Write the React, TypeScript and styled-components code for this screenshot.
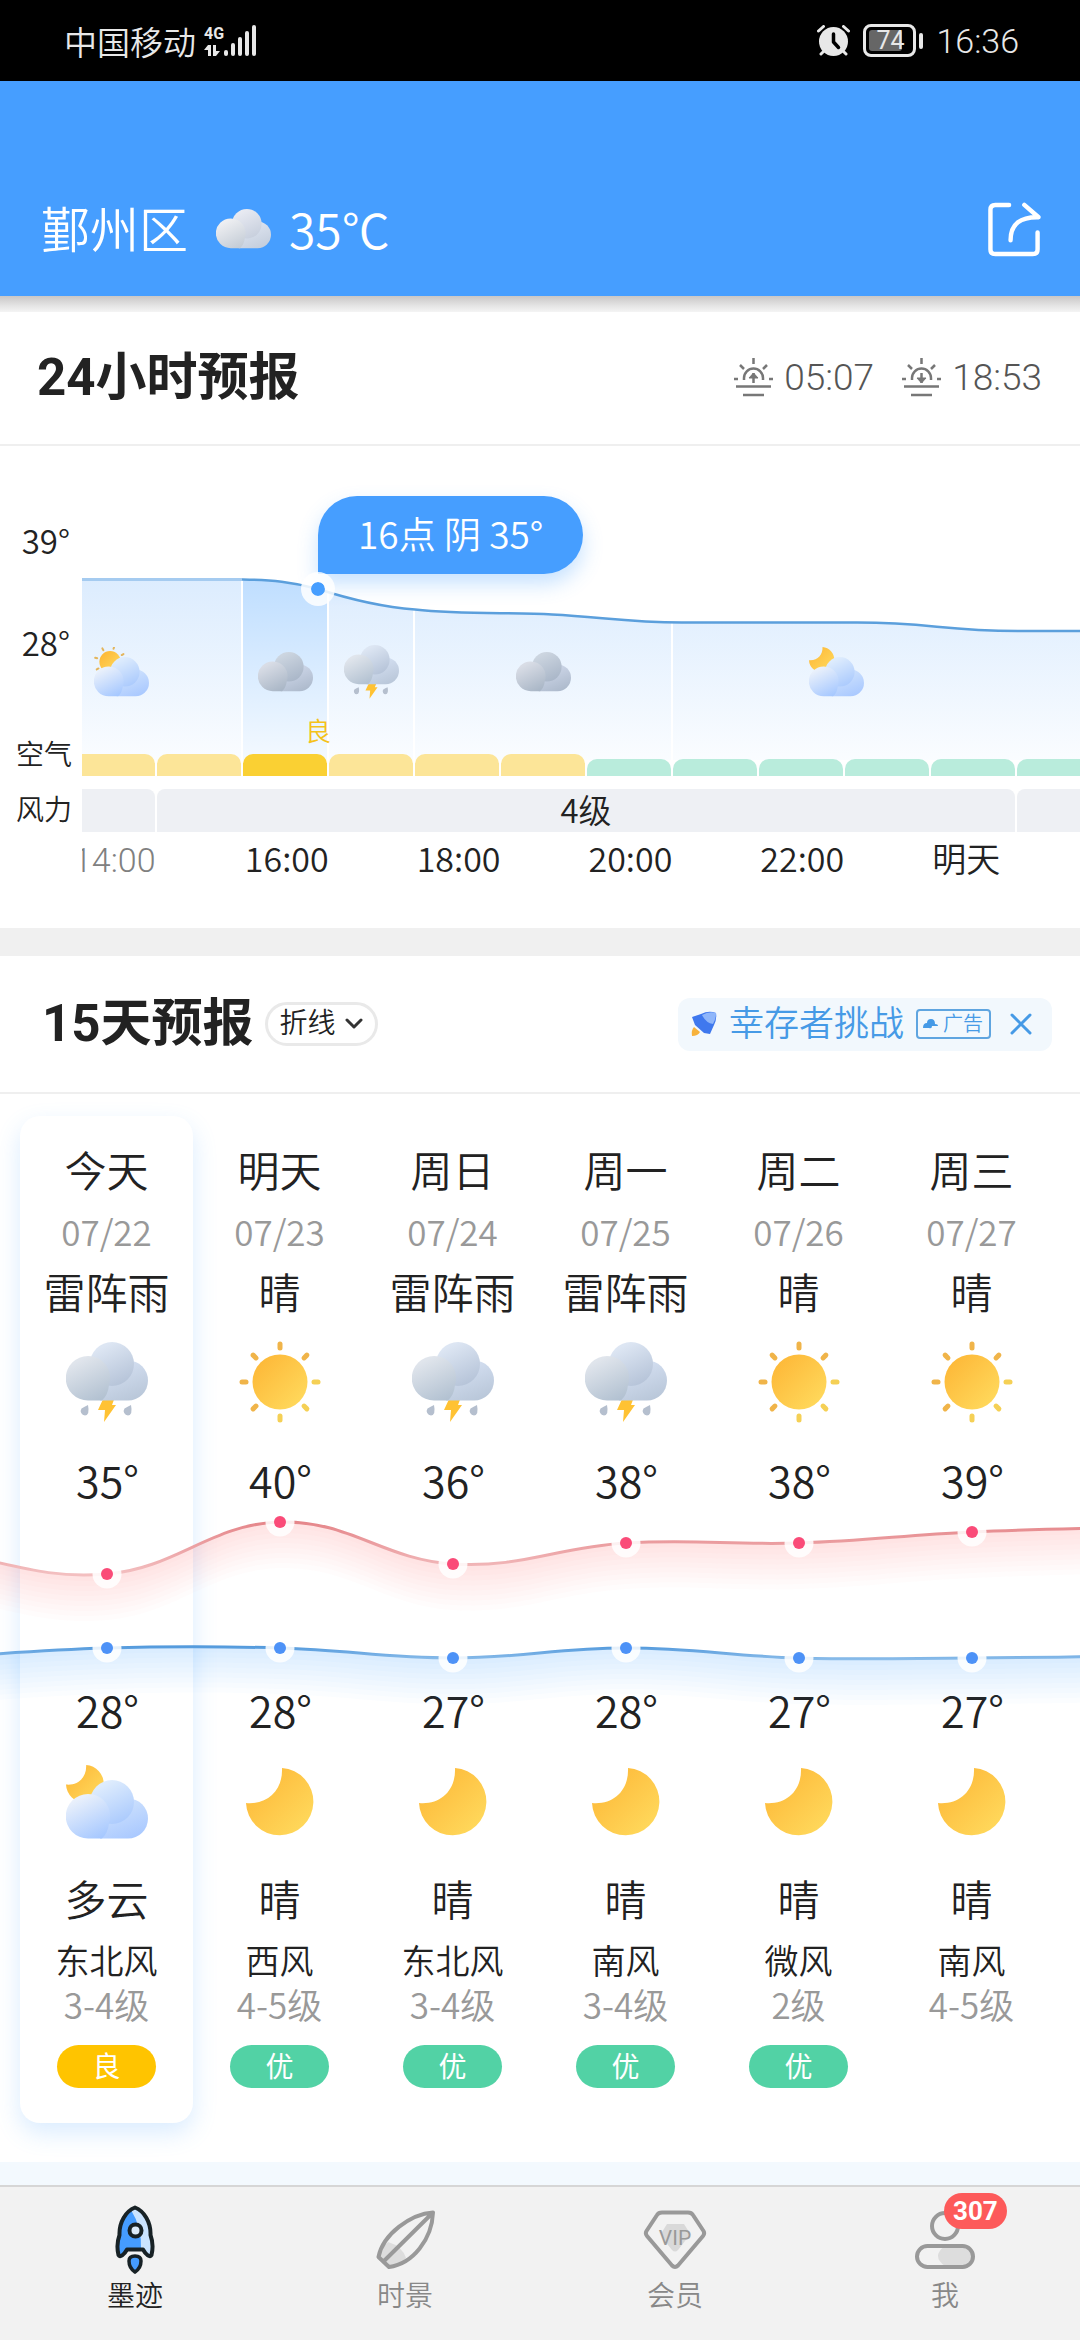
import React from "react";
import styled, { createGlobalStyle } from "styled-components";

const digits = '"Noto Sans CJK SC", sans-serif';

const GlobalStyle = createGlobalStyle`
  * { box-sizing: border-box; }
  body {
    margin: 0;
    background: #f2f2f2;
    color: #222;
    font-family: Roboto, "Noto Sans CJK SC", sans-serif;
    font-weight: 350;
  }
  h1, h2, p, ul { margin: 0; padding: 0; }
  ul { list-style: none; }
  svg { display: block; flex: none; }
  button, select { font: inherit; color: inherit; border: 0; padding: 0; background: none; }
`;

const Page = styled.div`
  display: flex;
  flex-direction: column;
  min-height: 100vh;
`;

/* ---------- status bar ---------- */

const StatusBar = styled.div`
  display: flex;
  align-items: center;
  justify-content: space-between;
  height: 81px;
  padding: 0 61px 0 64px;
  background: #000;
  color: #e8e8e8;
  font-size: 34px;
`;

const StatusGroup = styled.div<{ $gap: number }>`
  display: flex;
  align-items: center;
  gap: ${(p) => p.$gap}px;
`;

const Carrier = styled.span`
  font-size: 33px;
`;

const Network = styled.div`
  display: flex;
  align-items: flex-end;
`;

const NetworkType = styled.div`
  display: flex;
  flex-direction: column;
  gap: 3px;
  font-size: 16px;
  line-height: 16px;
  font-weight: 700;
`;

const Battery = styled.div`
  display: flex;
  align-items: center;
  gap: 3px;
  &::after {
    content: "";
    width: 4px;
    height: 16px;
    border-radius: 2px;
    background: #e8e8e8;
  }
`;

const BatteryCase = styled.div`
  width: 53px;
  height: 33px;
  padding: 3px;
  border: 3px solid #e8e8e8;
  border-radius: 8px;
`;

const BatteryLevel = styled.div`
  width: 33px;
  height: 21px;
  border-radius: 3px;
  background: #666;
  padding-left: 7px;
  font-size: 25px;
  line-height: 21px;
  font-weight: 400;
`;

/* ---------- header ---------- */

const Header = styled.header`
  display: flex;
  align-items: flex-end;
  justify-content: space-between;
  height: 215px;
  padding: 0 38px 24px 41px;
  background: #469eff;
  color: #fff;
`;

const Place = styled.h1`
  display: flex;
  align-items: center;
  gap: 28px;
  font-size: 49px;
  line-height: 72px;
  font-weight: inherit;
  svg { margin: 0 -10px 6px 0; }
`;

const CurrentTemp = styled.span`
  padding-bottom: 8px;
  font-family: ${digits};
  font-size: 48px;
`;

const ShareButton = styled.button`
  display: flex;
  align-items: center;
  height: 86px;
`;

const HeaderShadow = styled.div`
  height: 16px;
  background: linear-gradient(#c9c7c7, #e4e4e4 60%, #f4f4f4);
`;

/* ---------- sections ---------- */

const Section = styled.section`
  background: #fff;
`;

const SectionHead = styled.div<{ $left: number; $right: number; $height: number }>`
  display: flex;
  align-items: center;
  height: ${(p) => p.$height}px;
  padding: 0 ${(p) => p.$right}px 0 ${(p) => p.$left}px;
  border-bottom: 2px solid #efefef;
`;

const Title = styled.h2`
  font-size: 51px;
  line-height: 66px;
  font-weight: 700;
`;

const SunTimes = styled.div`
  display: flex;
  gap: 27px;
  margin-left: auto;
`;

const SunTime = styled.div`
  display: flex;
  align-items: center;
  gap: 10px;
  font-size: 37px;
  line-height: 44px;
  color: #555;
`;

const Gap = styled.div`
  height: 28px;
  background: #f0f0f0;
`;

/* ---------- hourly chart ---------- */

const Hourly = styled.div`
  display: grid;
  grid-template-columns: 82px 1fr;
  padding: 50px 0 46px;
`;

const Axis = styled.div`
  display: flex;
  flex-direction: column;
  align-items: flex-end;
  padding: 26px 10px 0 0;
`;

const AxisTemp = styled.span<{ $after: number }>`
  padding-right: 2px;
  margin-bottom: ${(p) => p.$after}px;
  font-family: ${digits};
  font-size: 33px;
  line-height: 36px;
`;

const RowLabel = styled.span`
  font-size: 28px;
  line-height: 40px;
`;

const Plot = styled.div`
  position: relative;
  display: flex;
  flex-direction: column;
  justify-content: flex-end;
  height: 280px;
`;

const PlotSvg = styled.svg`
  position: absolute;
  inset: 0;
  width: 100%;
  height: 100%;
`;

const Bubble = styled.div`
  position: absolute;
  left: 236px;
  top: 0;
  height: 78px;
  padding: 0 40px;
  border-radius: 39px 39px 39px 0;
  background: #469eff;
  box-shadow: 0 10px 20px rgba(70, 158, 255, 0.3);
  color: #fff;
  font-family: ${digits};
  font-size: 37px;
  line-height: 75px;
  white-space: nowrap;
`;

const BubbleDot = styled.span`
  position: absolute;
  left: 219px;
  top: 76px;
  width: 34px;
  height: 34px;
  border: 10px solid rgba(255, 255, 255, 0.85);
  border-radius: 50%;
  background: #469eff;
  background-clip: padding-box;
`;

const AirNow = styled.span`
  position: absolute;
  left: 223px;
  top: 216px;
  font-size: 26px;
  line-height: 40px;
  color: #f5c21b;
`;

const Segments = styled.div`
  position: relative;
  display: flex;
  gap: 2px;
  margin-bottom: 52px;
`;

const Segment = styled.div<{ $span: number; $start?: boolean }>`
  display: flex;
  flex: ${(p) => p.$span} 0 0;
  align-items: center;
  justify-content: ${(p) => (p.$start ? "flex-start" : "center")};
  padding-left: ${(p) => (p.$start ? 12 : 0)}px;
  height: 60px;
`;

const Bars = styled.div`
  position: relative;
  display: flex;
  align-items: flex-end;
  gap: 2px;
`;

const tones = { good: "#b9ecdc", fair: "#fce598", now: "#fad033" };
type Tone = keyof typeof tones;

const AirBar = styled.div<{ $span: number; $tone: Tone }>`
  flex: ${(p) => p.$span} 0 0;
  height: ${(p) => (p.$tone === "good" ? 17 : 22)}px;
  border-radius: 10px 10px 0 0;
  background: ${(p) => tones[p.$tone]};
  &:first-child { border-top-left-radius: 0; }
  &:last-child { border-top-right-radius: 0; }
`;

const WindLabel = styled(RowLabel)`
  margin-top: 15px;
  padding-right: 10px;
  text-align: right;
`;

const WindRow = styled.div`
  display: flex;
  gap: 2px;
  margin-top: 13px;
`;

const WindBar = styled.div<{ $span: number }>`
  flex: ${(p) => p.$span} 0 0;
  height: 43px;
  border-radius: 8px 8px 0 0;
  background: #eef0f4;
  font-family: ${digits};
  font-size: 33px;
  line-height: 40px;
  text-align: center;
  &:first-child { border-top-left-radius: 0; }
  &:last-child { border-top-right-radius: 0; }
`;

const HoursClip = styled.div`
  grid-column: 2;
  height: 50px;
  padding-top: 5px;
  overflow: hidden;
`;

/* the strip is scrolled slightly past its first hour */
const Hours = styled.div`
  display: flex;
  align-items: baseline;
  margin-left: -9px;
`;

const Hour = styled.span<{ $span: number; $past?: boolean }>`
  flex: ${(p) => p.$span} 0 0;
  font-family: ${(p) => (p.$past ? "inherit" : digits)};
  font-size: 34px;
  line-height: 42px;
  color: ${(p) => (p.$past ? "#808080" : "#222")};
  white-space: nowrap;
`;

/* ---------- daily head ---------- */

const ViewPicker = styled.label`
  display: flex;
  align-items: center;
  gap: 7px;
  height: 44px;
  margin-left: 11px;
  padding: 0 12px;
  border: 3px solid #e9e9e9;
  border-radius: 22px;
`;

const ViewSelect = styled.select`
  appearance: none;
  width: 58px;
  font-size: 28px;
  line-height: 38px;
  height: 38px;
`;

const Promo = styled.div`
  display: flex;
  align-items: center;
  height: 53px;
  margin-left: auto;
  padding: 0 20px 0 13px;
  border-radius: 12px;
  background: #f2f8fd;
  color: #469ae6;
`;

const PromoLink = styled.a`
  display: flex;
  align-items: center;
  gap: 12px;
  color: inherit;
  text-decoration: none;
  font-size: 35px;
  line-height: 55px;
`;

const AdTag = styled.span`
  display: flex;
  align-items: center;
  gap: 5px;
  height: 30px;
  padding: 0 6px 0 5px;
  border: 2px solid #5fa5e0;
  border-radius: 4px;
  font-size: 20px;
  line-height: 26px;
`;

const CloseButton = styled.button`
  display: flex;
  margin-left: 19px;
`;

/* ---------- daily columns ---------- */

const Daily = styled.div`
  position: relative;
  padding: 22px 22px 39px 20px;
`;

const DayList = styled.ul`
  display: grid;
  grid-template-columns: repeat(6, 1fr);
`;

const Day = styled.li<{ $today?: boolean }>`
  display: flex;
  flex-direction: column;
  align-items: center;
  padding: 27px 0 35px;
  border-radius: 20px;
  box-shadow: ${(p) => (p.$today ? "0 10px 24px rgba(70, 158, 255, 0.2)" : "none")};
`;

const DayWord = styled.p<{ $before?: number }>`
  margin-top: ${(p) => p.$before ?? 0}px;
  font-size: 42px;
  line-height: 60px;
`;

const Wind = styled.p`
  margin-top: 8px;
  font-size: 34px;
  line-height: 44px;
`;

const Figure = styled.p<{ $before: number }>`
  margin-top: ${(p) => p.$before}px;
  padding-bottom: 4px;
  font-family: ${digits};
  font-size: 35px;
  line-height: 40px;
  color: #999;
`;

const Temp = styled.p<{ $before: number }>`
  margin-top: ${(p) => p.$before}px;
  padding: 0 0 6px 2px;
  font-family: ${digits};
  font-size: 43px;
  line-height: 54px;
`;

const IconBox = styled.div<{ $before: number }>`
  display: flex;
  align-items: center;
  justify-content: center;
  height: 82px;
  margin-top: ${(p) => p.$before}px;
`;

const AirPill = styled.span<{ $good: boolean }>`
  width: 99px;
  height: 43px;
  margin-top: 17px;
  border-radius: 22px;
  background: ${(p) => (p.$good ? "#52d2a5" : "#ffc400")};
  color: #fff;
  font-size: 28px;
  line-height: 45px;
  font-weight: 400;
  text-align: center;
`;

const TrendSvg = styled.svg`
  position: absolute;
  top: 406px;
  left: 0;
  width: 100%;
  height: 220px;
  pointer-events: none;
`;

/* ---------- tab bar ---------- */

const Peek = styled.div`
  height: 23px;
  background: #f3f9fe;
`;

const TabBar = styled.nav`
  display: grid;
  grid-template-columns: repeat(4, 1fr);
  flex: 1;
  border-top: 2px solid #d6d6d6;
  background: #f2f2f2;
`;

const Tab = styled.button<{ $active?: boolean }>`
  display: flex;
  flex-direction: column;
  align-items: center;
  justify-content: flex-start;
  padding-top: 16px;
  font-size: 28px;
  line-height: 40px;
  color: ${(p) => (p.$active ? "#222" : "#888")};
`;

const TabIcon = styled.span`
  position: relative;
  display: flex;
  align-items: center;
  height: 74px;
`;

const Badge = styled.span`
  position: absolute;
  left: 29px;
  top: -10px;
  padding: 0 9px;
  border-radius: 18px;
  background: #fd5a5a;
  color: #fff;
  font-size: 26px;
  line-height: 36px;
  font-weight: 700;
`;

/* ---------- weather drawings ---------- */

const Gradients = styled.svg`
  position: absolute;
  width: 0;
  height: 0;
`;

const cloudTones: Record<string, string[]> = {
  rain: ["#e0e5ec", "#b2c1d1", "#dde6f3", "#b4c2d7", "#d5e0f2", "#b8c6d8"],
  dull: ["#d9dde6", "#a9b6c6", "#ccd5e0", "#a8b5c7", "#cfd8ea", "#acb9cb"],
  pale: ["#eeeff2", "#c4ccd6", "#e8eaf2", "#c6cedc", "#dfe5f0", "#c3cddc"],
  blue: ["#e9f0fb", "#a6c8ff", "#deecfd", "#a9c9fd", "#cfe2fd", "#a8c8ff"],
};

function WeatherGradients() {
  return (
    <Gradients aria-hidden="true">
      <defs>
        {Object.entries(cloudTones).map(([name, c]) =>
          [0, 1, 2].map((i) => (
            <linearGradient key={name + i} id={`${name}${i}`} x1="0.25" y1="0" x2="0.75" y2="1">
              <stop offset="0.1" stopColor={c[i * 2]} />
              <stop offset="1" stopColor={c[i * 2 + 1]} />
            </linearGradient>
          ))
        )}
        <linearGradient id="gold" x1="0.1" y1="0.1" x2="0.9" y2="0.9">
          <stop offset="0" stopColor="#fdb838" />
          <stop offset="1" stopColor="#ffd95c" />
        </linearGradient>
      </defs>
    </Gradients>
  );
}

function CloudShape({ tone, y = 0 }: { tone: string; y?: number }) {
  return (
    <g transform={`translate(0 ${y})`}>
      <path d="M62 18.500a20 20 0 0 1 0 40H34V30z" fill={`url(#${tone}2)`} />
      <circle cx="46" cy="22" r="22" fill={`url(#${tone}1)`} />
      <path d="M22 14a22 22 0 0 1 21 29q-1 10-7 15.500H22a22 22 0 0 1 0-44.500z" fill={`url(#${tone}0)`} />
    </g>
  );
}

function Cloud({ tone, width }: { tone: string; width: number }) {
  return (
    <svg width={width} viewBox="0 0 82 59" aria-hidden="true">
      <CloudShape tone={tone} />
    </svg>
  );
}

function Storm({ width }: { width: number }) {
  return (
    <svg width={width} viewBox="0 0 82 81" aria-hidden="true">
      <path d="M38 55h11l-3 8h4L38 80l1-12h-7z" fill="#ffc233" />
      <path d="M22 63q2 10-3 10.500a4.500 4.500 0 0 1-3.500-7q3-2 6.500-3.500zM65 63q2 10-3 10.500a4.500 4.500 0 0 1-3.500-7q3-2 6.500-3.500z" fill="#b5bfce" />
      <CloudShape tone="rain" />
    </svg>
  );
}

function Sun() {
  return (
    <svg width="82" height="82" viewBox="0 0 82 82" aria-hidden="true">
      <circle cx="41" cy="41" r="27.500" fill="url(#gold)" />
      {[0, 45, 90, 135, 180, 225, 270, 315].map((a) => (
        <line
          key={a}
          x1="41" y1="3" x2="41" y2="7"
          stroke={a > 60 && a < 200 ? "#f5d055" : "#f0b449"}
          strokeWidth="5"
          strokeLinecap="round"
          transform={`rotate(${a} 41 41)`}
        />
      ))}
    </svg>
  );
}

const moonPath = "M36 0A33.700 33.700 0 1 1 0 35C22 37 37 22 36 0Z";

function Moon() {
  return (
    <svg width="68" height="68" viewBox="0 0 68 68" aria-hidden="true">
      <path d={moonPath} fill="url(#gold)" />
    </svg>
  );
}

function MoonCloud({ width }: { width: number }) {
  return (
    <svg width={width} viewBox="0 0 82 74" aria-hidden="true">
      <path d={moonPath} transform="scale(0.56)" fill="url(#gold)" />
      <CloudShape tone="blue" y={15} />
    </svg>
  );
}

function SunCloud({ width }: { width: number }) {
  return (
    <svg width={width} viewBox="0 0 82 74" aria-hidden="true">
      <circle cx="24" cy="22" r="16" fill="url(#gold)" />
      {[-135, -90, -45, 0, 45].map((a) => (
        <line key={a} x1="24" y1="-1" x2="24" y2="2" stroke="#e3b55c" strokeWidth="3" strokeLinecap="round" transform={`rotate(${a + 15} 24 22)`} />
      ))}
      <CloudShape tone="blue" y={15} />
    </svg>
  );
}

function Horizon({ down }: { down?: boolean }) {
  return (
    <svg width="41" height="40" viewBox="0 0 41 40" fill="none" stroke="#777" strokeWidth="2.500" aria-hidden="true">
      <path d="M20.500 0v6M7 7l4 4M34 7l-4 4M1 21h4M36 21h4M11 22v-2a9.500 9.500 0 0 1 19 0v2M3 28.500h35M10 37h21" />
      <path d="M20.500 15v10" />
      <path d={down ? "M16 20l4.500 5 4.500-5z" : "M16 20l4.500-5 4.500 5z"} fill="#777" strokeWidth="1" />
    </svg>
  );
}

/* ---------- data ---------- */

const airBars: [number, Tone][] = [
  [73, "fair"], [84, "fair"], [84, "now"], [84, "fair"], [84, "fair"], [84, "fair"],
  [84, "good"], [84, "good"], [84, "good"], [84, "good"], [84, "good"], [63, "good"],
];

type Sky = "storm" | "sun" | "moon" | "mooncloud";

const days: {
  name: string; date: string; day: string; dayIcon: Sky; high: number; low: number;
  nightIcon: Sky; night: string; wind: string; level: string; air?: string;
}[] = [
  { name: "今天", date: "07/22", day: "雷阵雨", dayIcon: "storm", high: 35, low: 28, nightIcon: "mooncloud", night: "多云", wind: "东北风", level: "3-4级", air: "良" },
  { name: "明天", date: "07/23", day: "晴", dayIcon: "sun", high: 40, low: 28, nightIcon: "moon", night: "晴", wind: "西风", level: "4-5级", air: "优" },
  { name: "周日", date: "07/24", day: "雷阵雨", dayIcon: "storm", high: 36, low: 27, nightIcon: "moon", night: "晴", wind: "东北风", level: "3-4级", air: "优" },
  { name: "周一", date: "07/25", day: "雷阵雨", dayIcon: "storm", high: 38, low: 28, nightIcon: "moon", night: "晴", wind: "南风", level: "3-4级", air: "优" },
  { name: "周二", date: "07/26", day: "晴", dayIcon: "sun", high: 38, low: 27, nightIcon: "moon", night: "晴", wind: "微风", level: "2级", air: "优" },
  { name: "周三", date: "07/27", day: "晴", dayIcon: "sun", high: 39, low: 27, nightIcon: "moon", night: "晴", wind: "南风", level: "4-5级" },
];

const skies: Record<Sky, React.ReactNode> = {
  storm: <Storm width={82} />,
  sun: <Sun />,
  moon: <Moon />,
  mooncloud: <MoonCloud width={82} />,
};

/* ---------- charts ---------- */

const hourCurve = "M0 83.500H161C190 84 210 86 236 93C270 104 300 111 333 113.500C380 119 430 116 470 118.500C520 121 545 126.500 600 126.500H775C850 126.500 860 135 938 135H998";

function HourPlot() {
  const parts = [
    { x: 0, w: 159, now: false },
    { x: 161, w: 84, now: true },
    { x: 247, w: 84, now: false },
    { x: 333, w: 256, now: false },
    { x: 591, w: 407, now: false },
  ];
  return (
    <PlotSvg viewBox="0 0 998 280" preserveAspectRatio="none" aria-hidden="true">
      <defs>
        <linearGradient id="slot" gradientUnits="userSpaceOnUse" x1="0" y1="83" x2="0" y2="270">
          <stop offset="0" stopColor="#dcecfe" />
          <stop offset="1" stopColor="#fbfdff" />
        </linearGradient>
        <linearGradient id="slotNow" gradientUnits="userSpaceOnUse" x1="0" y1="83" x2="0" y2="270">
          <stop offset="0" stopColor="#bfdeff" />
          <stop offset="1" stopColor="#f5faff" />
        </linearGradient>
        <clipPath id="underCurve">
          <path d={`${hourCurve}V280H0Z`} />
        </clipPath>
      </defs>
      <g clipPath="url(#underCurve)">
        {parts.map((p) => (
          <rect key={p.x} x={p.x} y="80" width={p.w} height="184" fill={p.now ? "url(#slotNow)" : "url(#slot)"} />
        ))}
      </g>
      <path d={hourCurve} fill="none" stroke="#5b9fdc" strokeWidth="2.500" />
      <path d="M0 83.500H160" stroke="#a5cbf0" strokeWidth="3" />
    </PlotSvg>
  );
}

type Point = [number, number];

function smooth(points: Point[], shift = 0) {
  let d = "";
  points.forEach(([x, y], i) => {
    if (i === 0) {
      d += `${x} ${y + shift}`;
      return;
    }
    const p0 = points[Math.max(i - 2, 0)];
    const p1 = points[i - 1];
    const p3 = points[Math.min(i + 1, points.length - 1)];
    const dx = (x - p1[0]) * 0.4;
    const s1 = (y - p0[1]) / (x - p0[0]);
    const s2 = (p3[1] - p1[1]) / (p3[0] - p1[0]);
    d += `C${p1[0] + dx} ${p1[1] + s1 * dx + shift} ${x - dx} ${y - s2 * dx + shift} ${x} ${y + shift}`;
  });
  return d;
}

function Trend() {
  const highs: Point[] = [[-66, 50], [107, 74], [280, 22], [453, 64], [626, 43], [799, 43], [972, 32], [1145, 27]];
  const lows: Point[] = [[-66, 158], [107, 148], [280, 148], [453, 158], [626, 148], [799, 158], [972, 158], [1145, 156]];
  const lines = [
    { id: "warm", points: highs, glow: "#ff5a5a", dot: "#fa4b78" },
    { id: "cool", points: lows, glow: "#3b98f5", dot: "#4d92f7" },
  ];
  const steps = [6, 11, 16, 21, 26, 31, 36, 41, 46];
  return (
    <TrendSvg viewBox="0 0 1080 220" preserveAspectRatio="none" aria-hidden="true">
      <defs>
        <linearGradient id="warm" gradientUnits="userSpaceOnUse" x1="0" y1="22" x2="0" y2="74">
          <stop offset="0" stopColor="#e5868a" />
          <stop offset="1" stopColor="#f3bfc0" />
        </linearGradient>
        <linearGradient id="cool" gradientUnits="userSpaceOnUse" x1="0" y1="146" x2="0" y2="160">
          <stop offset="0" stopColor="#5299dc" />
          <stop offset="1" stopColor="#8cbdea" />
        </linearGradient>
      </defs>
      {lines.map((l) => (
        <g key={l.id}>
          {steps.map((s) => (
            <path
              key={s}
              d={`M${smooth(l.points)}L${smooth([...l.points].reverse(), s)}Z`}
              fill={l.glow}
              opacity="0.018"
            />
          ))}
          <path d={`M${smooth(l.points)}`} fill="none" stroke={`url(#${l.id})`} strokeWidth="3" />
          {l.points.slice(1, -1).map(([x, y]) => (
            <g key={x}>
              <circle cx={x} cy={y} r="14.500" fill="#fff" opacity="0.85" />
              <circle cx={x} cy={y} r="6" fill={l.dot} />
            </g>
          ))}
        </g>
      ))}
    </TrendSvg>
  );
}

/* ---------- page ---------- */

export default function App() {
  return (
    <Page>
      <GlobalStyle />
      <WeatherGradients />

      <StatusBar>
        <StatusGroup $gap={8}>
          <Carrier>中国移动</Carrier>
          <Network>
            <NetworkType>
              <span>4G</span>
              <svg width="16" height="11" viewBox="0 0 16 11" fill="#e8e8e8" aria-hidden="true">
                <path d="M4 0h3v11H4V5H0zM9 0h3v6h4l-4 5H9z" />
              </svg>
            </NetworkType>
            <svg width="32" height="31" viewBox="0 0 32 31" fill="#e8e8e8" aria-hidden="true">
              <rect x="0" y="25" width="4" height="6" rx="2" />
              <rect x="7" y="18" width="4" height="13" rx="2" />
              <rect x="14" y="12" width="4" height="19" rx="2" />
              <rect x="21" y="6" width="4" height="25" rx="2" />
              <rect x="28" y="0" width="4" height="31" rx="2" />
            </svg>
          </Network>
        </StatusGroup>
        <StatusGroup $gap={13}>
          <svg width="33" height="31" viewBox="0 0 33 31" aria-hidden="true">
            <circle cx="16.500" cy="16.500" r="14.500" fill="#e8e8e8" />
            <path d="M1.500 6l5-4.500M31.500 6l-5-4.500M4 29l4-4M29 29l-4-4" stroke="#e8e8e8" strokeWidth="3" strokeLinecap="round" />
            <path d="M16.500 9v8l5 5.500" fill="none" stroke="#000" strokeWidth="3.500" strokeLinecap="round" strokeLinejoin="round" />
          </svg>
          <Battery>
            <BatteryCase>
              <BatteryLevel>74</BatteryLevel>
            </BatteryCase>
          </Battery>
          <span>16:36</span>
        </StatusGroup>
      </StatusBar>

      <Header>
        <Place>
          鄞州区 <Cloud tone="pale" width={55} /> <CurrentTemp>35℃</CurrentTemp>
        </Place>
        <ShareButton aria-label="分享">
          <svg width="55" height="55" viewBox="0 0 55 56" fill="none" stroke="#fff" strokeWidth="4.500" strokeLinecap="round" strokeLinejoin="round" aria-hidden="true">
            <path d="M22 3H8Q3 3 3 8v40q0 5 5 5h38q5 0 5-5V31" />
            <path d="M23.500 39C23.500 22 34 15 52 15.500L37.500 3" />
          </svg>
        </ShareButton>
      </Header>
      <HeaderShadow />

      <Section>
        <SectionHead $left={37} $right={38} $height={134}>
          <Title>24小时预报</Title>
          <SunTimes>
            <SunTime><Horizon />05:07</SunTime>
            <SunTime><Horizon down />18:53</SunTime>
          </SunTimes>
        </SectionHead>
        <Hourly>
          <Axis>
            <AxisTemp $after={66}>39°</AxisTemp>
            <AxisTemp $after={76}>28°</AxisTemp>
            <RowLabel>空气</RowLabel>
          </Axis>
          <Plot>
            <HourPlot />
            <Segments>
              <Segment $span={147} $start><SunCloud width={55} /></Segment>
              <Segment $span={84}><Cloud tone="dull" width={55} /></Segment>
              <Segment $span={84}><Storm width={55} /></Segment>
              <Segment $span={256}><Cloud tone="dull" width={55} /></Segment>
              <Segment $span={327}><MoonCloud width={55} /></Segment>
              <Segment $span={78} />
            </Segments>
            <Bars>
              {airBars.map(([span, tone], i) => (
                <AirBar key={i} $span={span} $tone={tone} />
              ))}
            </Bars>
            <AirNow>良</AirNow>
            <Bubble>16点 阴 35°</Bubble>
            <BubbleDot />
          </Plot>
          <WindLabel>风力</WindLabel>
          <WindRow>
            <WindBar $span={73} />
            <WindBar $span={858}>4级</WindBar>
            <WindBar $span={63} />
          </WindRow>
          <HoursClip>
            <Hours>
              <Hour $span={172} $past>14:00</Hour>
              <Hour $span={172}>16:00</Hour>
              <Hour $span={172}>18:00</Hour>
              <Hour $span={172}>20:00</Hour>
              <Hour $span={172}>22:00</Hour>
              <Hour $span={148}>明天</Hour>
            </Hours>
          </HoursClip>
        </Hourly>
      </Section>

      <Gap />

      <Section>
        <SectionHead $left={42} $right={28} $height={138}>
          <Title>15天预报</Title>
          <ViewPicker>
            <ViewSelect aria-label="显示方式" defaultValue="line">
              <option value="line">折线</option>
              <option value="list">列表</option>
            </ViewSelect>
            <svg width="18" height="12" viewBox="0 0 18 12" fill="none" stroke="#333" strokeWidth="3" strokeLinecap="round" strokeLinejoin="round" aria-hidden="true">
              <path d="M2 2l7 7 7-7" />
            </svg>
          </ViewPicker>
          <Promo>
            <PromoLink href="#challenge">
              <svg width="26" height="26" viewBox="0 0 26 26" aria-hidden="true">
                <path d="M3 16q-3 3-2 9 6 0 8-4z" fill="#f7b23c" />
                <path d="M1 6l9-3q8-4 15-1 1 6-2 12l-4 9-6-1-9-8z" fill="#3f78ee" />
                <path d="M11 4q7-4 14-2 0 6-3 11-7-1-11-9z" fill="#8fb6fa" />
              </svg>
              幸存者挑战
              <AdTag>
                <svg width="15" height="10" viewBox="0 0 15 10" fill="#469ae6" aria-hidden="true">
                  <path d="M0 9q0-5 4-5 0-4 4-4t4 5q3 0 3 2H9q0 3-3 2z" />
                </svg>
                广告
              </AdTag>
            </PromoLink>
            <CloseButton aria-label="关闭">
              <svg width="22" height="22" viewBox="0 0 22 22" stroke="#469ae6" strokeWidth="3" strokeLinecap="round" aria-hidden="true">
                <path d="M2 2l18 18M20 2L2 20" />
              </svg>
            </CloseButton>
          </Promo>
        </SectionHead>
        <Daily>
          <DayList>
            {days.map((d, i) => (
              <Day key={d.date} $today={i === 0}>
                <DayWord>{d.name}</DayWord>
                <Figure $before={8}>{d.date}</Figure>
                <DayWord $before={10}>{d.day}</DayWord>
                <IconBox $before={16}>{skies[d.dayIcon]}</IconBox>
                <Temp $before={29}>{d.high}°</Temp>
                <Temp $before={170}>{d.low}°</Temp>
                <IconBox $before={19}>{skies[d.nightIcon]}</IconBox>
                <DayWord $before={29}>{d.night}</DayWord>
                <Wind>{d.wind}</Wind>
                <Figure $before={0}>{d.level}</Figure>
                {d.air && <AirPill $good={d.air === "优"}>{d.air}</AirPill>}
              </Day>
            ))}
          </DayList>
          <Trend />
        </Daily>
      </Section>

      <Peek />

      <TabBar>
        <Tab $active>
          <TabIcon>
            <svg width="40" height="70" viewBox="0 0 40 70" aria-hidden="true">
              <path d="M20 2.500C29 6 36 17 35.500 30C38 37 38 44 36.500 50C35 53 31 50 28 44.500H12C9 50 5 53 3.500 50C2 44 2 37 4.500 30C4 17 11 6 20 2.500Z" fill="#459cff" />
              <path d="M16 5l4-2.500C29 6 36 17 35.500 30C38 37 38 44 36.500 50C35 53 31 50 28 44.500H26q1-22-10-39.500z" fill="#c9e3ff" />
              <path d="M20 2.500C29 6 36 17 35.500 30C38 37 38 44 36.500 50C35 53 31 50 28 44.500H12C9 50 5 53 3.500 50C2 44 2 37 4.500 30C4 17 11 6 20 2.500Z" fill="none" stroke="#182226" strokeWidth="4" strokeLinejoin="round" />
              <circle cx="20.500" cy="25.500" r="6" fill="#dcebfa" stroke="#182226" strokeWidth="4" />
              <path d="M20 51q6 0 6 5 0 7-6 11-6-4-6-11 0-5 6-5z" fill="#459cff" stroke="#182226" strokeWidth="3.500" />
            </svg>
          </TabIcon>
          墨迹
        </Tab>
        <Tab>
          <TabIcon>
            <svg width="59" height="60" viewBox="0 0 59 60" fill="none" stroke="#999" strokeWidth="4" strokeLinejoin="round" aria-hidden="true">
              <path d="M12 32q14 4 18 16-8 9-17 9L3 47q2-9 9-15z" fill="#ddd" stroke="none" />
              <path d="M57 2.500C35 4 7 24 2.500 47L13 57C37 54 56 29 57 2.500ZM57 2.500L8 51" />
            </svg>
          </TabIcon>
          时景
        </Tab>
        <Tab>
          <TabIcon>
            <svg width="64" height="60" viewBox="0 0 64 60" fill="none" aria-hidden="true">
              <path d="M24 14h17l5 8q0 4-4 9l-7 9q-3 3-6 0l-8-10q-3-4-2-8z" fill="#d9d9d9" />
              <path d="M19 2.500H45Q48.500 2.500 50 5L60.500 21Q62 23.500 60 26L35 55.500Q32 58.500 29 55.500L4 26Q2 23.500 3.500 21L14 5Q15.500 2.500 19 2.500Z" stroke="#999" strokeWidth="4" />
              <text x="32" y="35" textAnchor="middle" fontSize="21" fontWeight="400" fill="#999">VIP</text>
            </svg>
          </TabIcon>
          会员
        </Tab>
        <Tab>
          <TabIcon>
            <svg width="60" height="60" viewBox="0 0 60 60" fill="none" aria-hidden="true">
              <path d="M30 36h17a10 10 0 0 1 0 20H30q-14-10 0-20z" fill="#ddd" />
              <circle cx="30" cy="16" r="13" stroke="#999" strokeWidth="4" />
              <rect x="2" y="36" width="56" height="21" rx="10.500" stroke="#999" strokeWidth="4" />
            </svg>
            <Badge>307</Badge>
          </TabIcon>
          我
        </Tab>
      </TabBar>
    </Page>
  );
}
